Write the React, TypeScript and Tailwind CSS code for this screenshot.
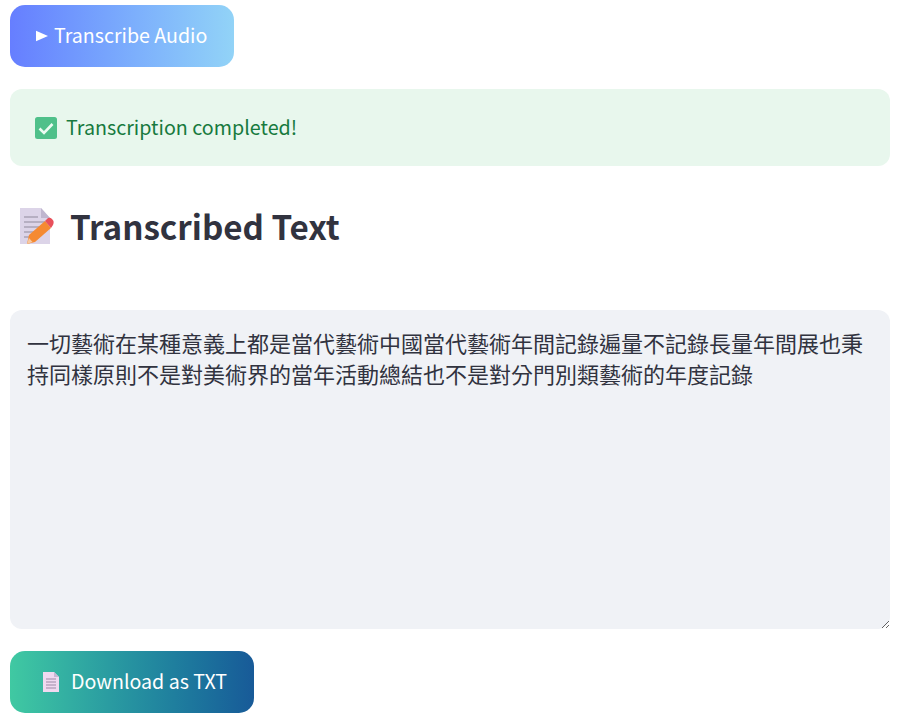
const font = { fontFamily: '"Noto Sans CJK TC", "Noto Sans", sans-serif' };

function PlayIcon() {
  return (
    <svg width="12" height="12" viewBox="0 0 12 12" className="shrink-0">
      <path d="M0 .8 L12 6 L0 11.2 Z" fill="#ffffff" />
    </svg>
  );
}

function CheckIcon() {
  return (
    <svg width="22" height="22" viewBox="0 0 22 22" className="shrink-0">
      <rect x="0" y="0" width="22" height="22" rx="2.5" fill="#4fc08a" />
      <path d="M4.5 11.5 L9 16 L17.5 7" fill="none" stroke="#ecfbf2" strokeWidth="2.6" />
    </svg>
  );
}

function MemoIcon() {
  return (
    <svg width="36" height="38" viewBox="0 0 36 38" className="shrink-0">
      <path d="M2 1 H23 L32 11 V37 H2 Z" fill="#dcd4e8" />
      <path d="M23 1 L32 11 H23 Z" fill="#bfb6cf" />
      <path d="M6 10 H20 M6 15 H27 M6 20 H27 M6 25 H18 M6 30 H12" stroke="#a9a3b5" strokeWidth="1.4" />
      <path d="M9 37 L11 28 L27 14 L33 21 L17 35 Z" fill="#f58a32" />
      <path d="M27 14 L30 11 Q32 10 34 12 L35.5 14 Q36 16 35 18 L33 21 Z" fill="#e8505b" />
      <path d="M9 37 L11 31 L14.5 35 Z" fill="#f7c9a0" />
    </svg>
  );
}

function PageIcon() {
  return (
    <svg width="18" height="22" viewBox="0 0 18 22" className="shrink-0">
      <path d="M1 1 H12 L17 6 V21 H1 Z" fill="#f0d9f0" />
      <path d="M12 1 L17 6 H12 Z" fill="#c9b6d2" />
      <path d="M4 8 H14 M4 11 H14 M4 14 H14 M4 17 H14" stroke="#9c8aa6" strokeWidth="1" />
    </svg>
  );
}

export default function App() {
  return (
    <div className="min-h-screen bg-white pl-[10px] pr-[8px] pt-[5px]" style={font}>
      <button className="flex items-center h-[62px] w-[224px] pl-[26px] gap-[6px] rounded-[15px] bg-gradient-to-r from-[#667eff] to-[#92d3f7] text-white text-[19.6px]">
        <PlayIcon />
        <span className="relative top-[-1px]">Transcribe Audio</span>
      </button>

      <div className="mt-[22px] flex items-center h-[77px] pl-[25px] gap-[9px] rounded-[12px] bg-[#e8f7ed] text-[#177a3e] text-[19.7px]">
        <CheckIcon />
        <span className="relative top-[-1px]">Transcription completed!</span>
      </div>

      <div className="mt-[39px] flex items-center h-[42px] pl-[8px] gap-[16px]">
        <MemoIcon />
        <h2 className="text-[33.2px] font-semibold text-[#31333f]">Transcribed Text</h2>
      </div>

      <textarea
        readOnly
        className="mt-[63px] block w-full h-[319px] resize-y rounded-[12px] bg-[#f0f2f6] text-[#31333f] text-[22px] leading-[31px] pl-[17px] pr-[25px] py-[17px] outline-none"
        style={font}
        defaultValue="一切藝術在某種意義上都是當代藝術中國當代藝術年間記錄遍量不記錄長量年間展也秉持同樣原則不是對美術界的當年活動總結也不是對分門別類藝術的年度記錄"
      />

      <button className="mt-[22px] flex items-center h-[62px] w-[244px] pl-[32px] gap-[11px] rounded-[15px] bg-gradient-to-r from-[#40c9a2] to-[#185a98] text-white text-[19.6px]">
        <PageIcon />
        <span className="relative top-[-1px]">Download as TXT</span>
      </button>
    </div>
  );
}
